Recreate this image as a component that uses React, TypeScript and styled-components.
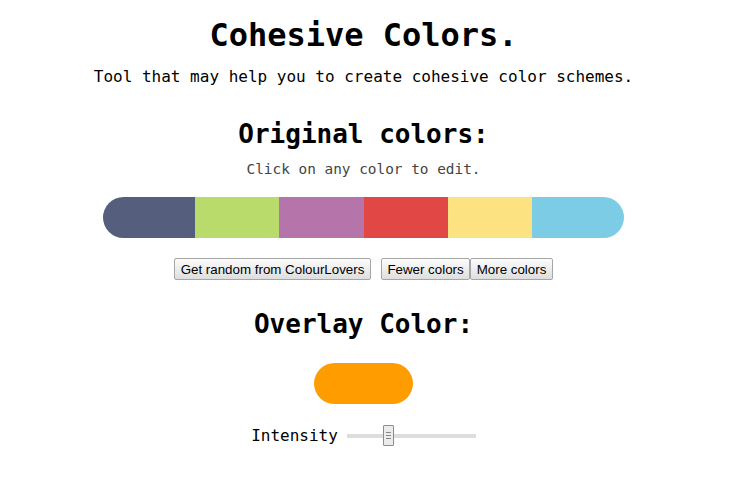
import React, { useState } from "react";
import styled, { createGlobalStyle } from "styled-components";

const GlobalStyle = createGlobalStyle`
  html, body {
    margin: 0;
    padding: 0;
    background: #fff;
  }
  body {
    font-family: "DejaVu Sans Mono", "Liberation Mono", monospace;
    color: #000;
  }
`;

const palette = ["#555f7d", "#b9db6c", "#b575aa", "#e14845", "#fde282", "#7dcce5"];

const App = () => {
  const [intensity, setIntensity] = useState(31);

  return (
    <>
      <GlobalStyle />
      <Page>
        <Title>Cohesive Colors.</Title>
        <Subtitle>Tool that may help you to create cohesive color schemes.</Subtitle>

        <SectionTitle $top={33}>Original colors:</SectionTitle>
        <Hint>Click on any color to edit.</Hint>

        <Palette>
          {palette.map((c) => (
            <Swatch key={c} $color={c} />
          ))}
        </Palette>

        <ButtonRow>
          <Button $gap={10}>Get random from ColourLovers</Button>
          <Button>Fewer colors</Button>
          <Button>More colors</Button>
        </ButtonRow>

        <SectionTitle $top={29}>Overlay Color:</SectionTitle>
        <OverlayPill />

        <SliderRow>
          <Label>Intensity</Label>
          <Range
            type="range"
            min={0}
            max={100}
            value={intensity}
            onChange={(e) => setIntensity(Number(e.target.value))}
          />
        </SliderRow>
      </Page>
    </>
  );
};

const Page = styled.div`
  width: 727px;
  display: flex;
  flex-direction: column;
  align-items: center;
  padding-bottom: 30px;
`;

const Title = styled.h1`
  margin: 16px 0 0;
  font-size: 32px;
  line-height: 38px;
  font-weight: bold;
`;

const Subtitle = styled.p`
  margin: 13px 0 0;
  font-size: 16px;
  line-height: 19px;
`;

const SectionTitle = styled.h2<{ $top: number }>`
  margin: ${(p) => p.$top}px 0 0;
  font-size: 26px;
  line-height: 31px;
  font-weight: bold;
`;

const Hint = styled.p`
  margin: 11px 0 0;
  font-size: 14.4px;
  line-height: 17px;
  color: #444;
`;

const Palette = styled.div`
  margin-top: 19px;
  width: 521px;
  height: 41px;
  display: grid;
  grid-template-columns: 92px repeat(4, 1fr) 92px;
  border-radius: 21px;
  overflow: hidden;
`;

const Swatch = styled.div<{ $color: string }>`
  background: ${(p) => p.$color};
  cursor: pointer;
`;

const ButtonRow = styled.div`
  margin-top: 20px;
  display: flex;
`;

const Button = styled.button<{ $gap?: number }>`
  margin: 0 ${(p) => p.$gap ?? 0}px 0 0;
  height: 22px;
  padding: 0 5.5px;
  font-family: "Liberation Sans", Arial, sans-serif;
  font-size: 13.33px;
  color: #000;
  border: 1px solid #a6a6a6;
  border-radius: 2px;
  background: linear-gradient(#fcfcfc, #dedede);
  cursor: pointer;
`;

const OverlayPill = styled.div`
  margin-top: 23px;
  width: 99px;
  height: 41px;
  border-radius: 21px;
  background: #ff9c00;
  cursor: pointer;
`;

const SliderRow = styled.div`
  margin-top: 21px;
  display: flex;
  align-items: center;
  gap: 9px;
`;

const Label = styled.span`
  font-size: 16px;
  line-height: 21px;
`;

const Range = styled.input`
  -webkit-appearance: none;
  appearance: none;
  margin: 0;
  width: 129px;
  height: 21px;
  background: transparent;

  &::-webkit-slider-runnable-track {
    height: 4px;
    background: #ddd;
  }

  &::-webkit-slider-thumb {
    -webkit-appearance: none;
    width: 11px;
    height: 21px;
    margin-top: -8.5px;
    box-sizing: border-box;
    border: 1px solid #8c8c8c;
    border-radius: 1px;
    background-color: #ececec;
    background-image: linear-gradient(#888, #888), linear-gradient(#888, #888),
      linear-gradient(#888, #888);
    background-size: 5px 1px;
    background-position: center 6px, center 9px, center 12px;
    background-repeat: no-repeat;
  }

  &:focus {
    outline: none;
  }
`;

export default App;
